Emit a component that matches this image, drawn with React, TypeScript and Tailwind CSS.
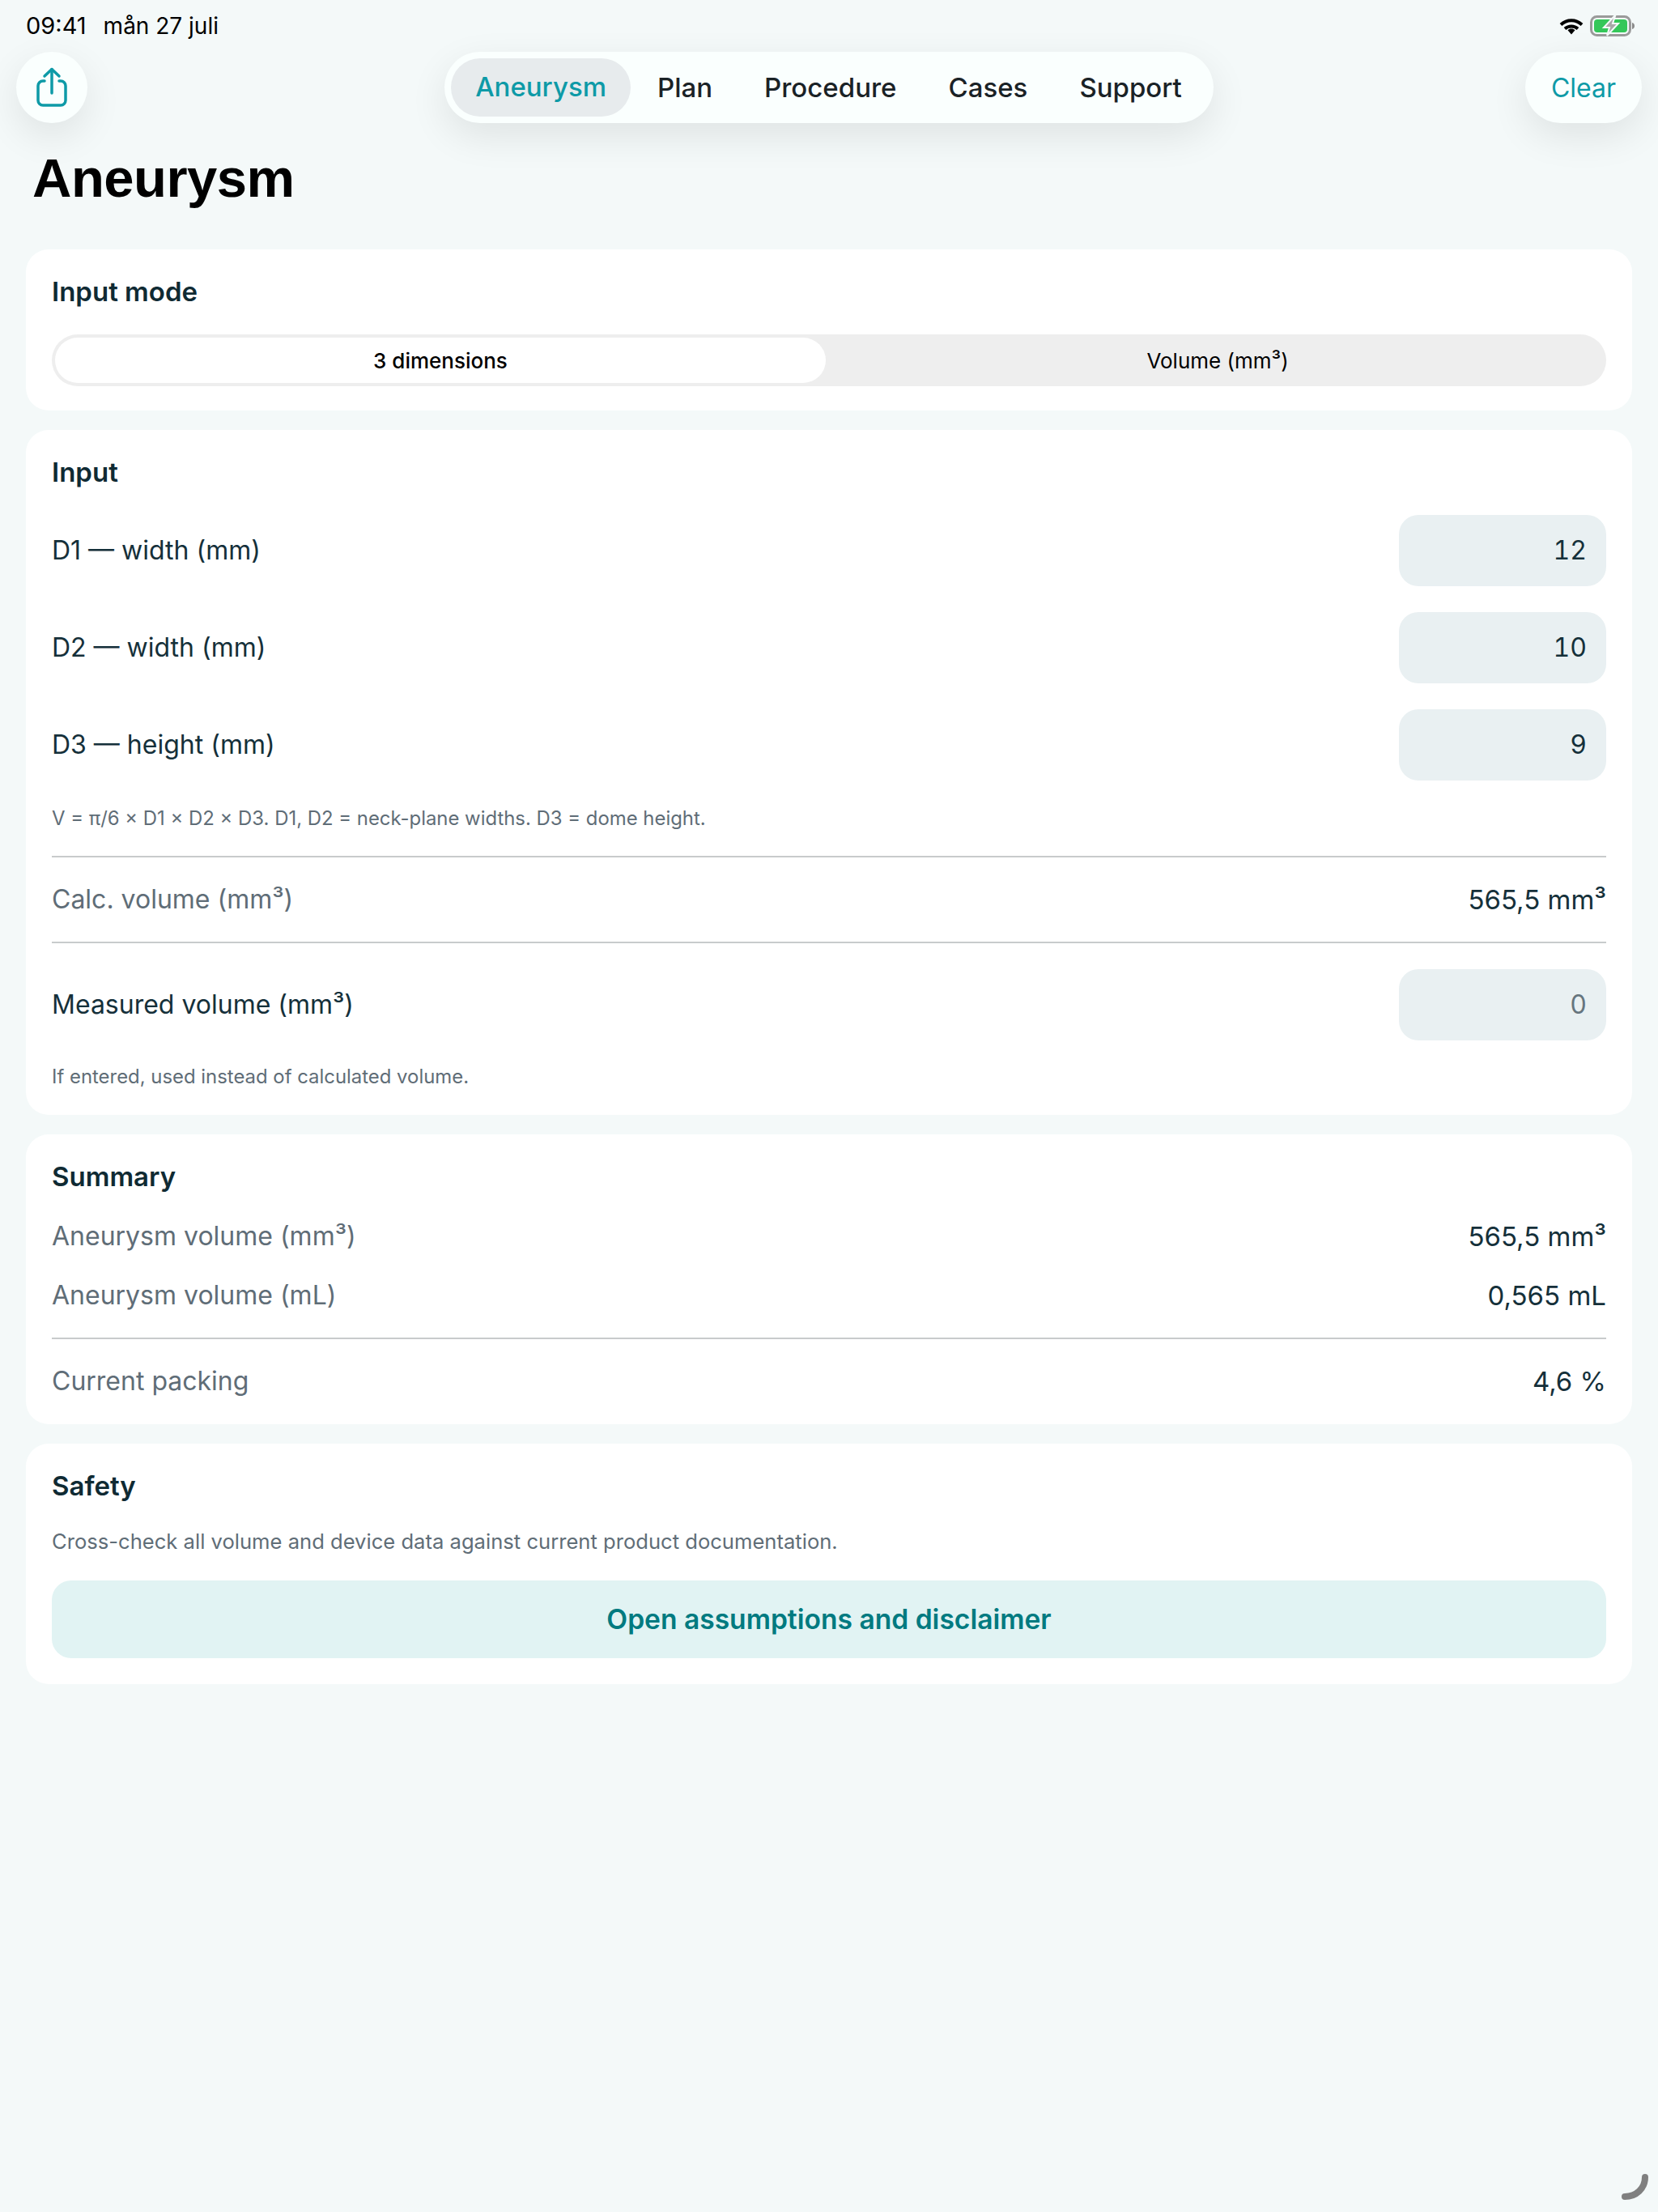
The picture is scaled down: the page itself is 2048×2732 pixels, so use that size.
import React from "react";

function Divider() {
  return <div className="h-[2px] bg-[#c8cbcc]" />;
}

function Field({ label, value, muted }: { label: string; value: string; muted?: boolean }) {
  return (
    <div className="flex items-center justify-between h-[88px]">
      <span className="text-[32px] leading-[44px] text-[#15303a]">{label}</span>
      <div
        className={`w-[256px] h-[88px] rounded-[24px] bg-[#e9f0f2] flex items-center justify-end pr-[24px] text-[32px] tabular-nums ${
          muted ? "text-[#66757e]" : "text-[#15303a]"
        }`}
      >
        {value}
      </div>
    </div>
  );
}

function Stat({ label, value }: { label: string; value: string }) {
  return (
    <div className="flex items-center justify-between">
      <span className="text-[32px] leading-[44px] text-[#5f6d77]">{label}</span>
      <span className="text-[33px] leading-[44px] text-[#15303a]">{value}</span>
    </div>
  );
}

function Card({ title, pb, children }: { title: string; pb: string; children: React.ReactNode }) {
  return (
    <section className={`bg-white rounded-[28px] px-[32px] pt-[32px] ${pb}`}>
      <h2 className="text-[33px] leading-[40px] font-semibold text-[#0f2a33]">{title}</h2>
      {children}
    </section>
  );
}

export default function App() {
  return (
    <div
      className="relative min-h-[2732px] bg-[#f4f9f9] overflow-hidden"
      style={{ fontFamily: "Inter, 'Liberation Sans', sans-serif" }}
    >
      <div className="h-[64px] flex justify-between pl-[32px] pr-[28px] pt-[12px]">
        <div className="flex items-baseline gap-[21px] text-[29px] leading-[40px] text-black">
          <span>09:41</span>
          <span className="text-[28px]">mån 27 juli</span>
        </div>
        <div className="flex items-start gap-[8px] pt-[7px]">
          <svg width="30" height="22" viewBox="0 0 30 22" className="mt-[3px]">
            <path d="M2 8.500C9.500 1.500 20.500 1.500 28 8.500" fill="none" stroke="#000" strokeWidth="4" />
            <path d="M7 13.500C11.500 9.500 18.500 9.500 23 13.500" fill="none" stroke="#000" strokeWidth="4" />
            <path d="M15 13.500c1.800 0 3.300.6 4.500 1.800L15 20.500l-4.500-5.200c1.200-1.200 2.700-1.800 4.500-1.800z" fill="#000" />
          </svg>
          <svg width="56" height="26" viewBox="0 0 56 26">
            <rect x="1.500" y="1.500" width="48" height="23" rx="7" fill="none" stroke="#9a9a9a" strokeWidth="3" />
            <rect x="5" y="5" width="41" height="16" rx="4" fill="#34c759" />
            <path d="M52 9c2 .5 3 2 3 4s-1 3.500-3 4z" fill="#8a8a8a" />
            <path d="M30 1 17 15h7l-3 10 14-15h-7l3-9z" fill="#a8a8a8" stroke="#f4f9f9" strokeWidth="2" />
          </svg>
        </div>
      </div>

      <header className="grid grid-cols-[1fr_auto_1fr] items-start px-[20px]">
        <div className="flex justify-start">
          <button className="w-[88px] h-[88px] rounded-full bg-[#fafffe] shadow-[0_16px_48px_rgba(0,0,0,0.09)] flex items-center justify-center">
            <svg width="42" height="52" viewBox="0 0 42 52" fill="none" stroke="#0e9aa7" strokeWidth="3.500" strokeLinecap="round" strokeLinejoin="round">
              <path d="M21 33V3.500" />
              <path d="M12 12l9-8.500 9 8.500" />
              <path d="M12 18H10a6 6 0 0 0-6 6V42a6 6 0 0 0 6 6H32a6 6 0 0 0 6-6V24a6 6 0 0 0-6-6H30" />
            </svg>
          </button>
        </div>
        <nav className="h-[88px] rounded-[44px] bg-[#fafffe] shadow-[0_16px_48px_rgba(0,0,0,0.09)] p-[8px] flex items-center text-[33px] font-medium text-[#1a2226]">
          <span className="h-[72px] px-[30px] flex items-center rounded-[36px] bg-[#e7ebed] text-[#0e9aa7]">Aneurysm</span>
          <span className="pl-[33px] pr-[32px] pt-[1px]">Plan</span>
          <span className="px-[32px] pt-[1px]">Procedure</span>
          <span className="px-[32px] pt-[1px]">Cases</span>
          <span className="pl-[32px] pr-[31px] pt-[1px]">Support</span>
        </nav>
        <div className="flex justify-end">
          <button className="w-[144px] h-[88px] pt-[1px] rounded-[44px] bg-[#fafffe] shadow-[0_16px_48px_rgba(0,0,0,0.09)] text-[32px] text-[#0e9aa7]">
            Clear
          </button>
        </div>
      </header>

      <h1
        className="pl-[40px] mt-[26px] h-[84px] text-[67px] leading-[84px] font-bold tracking-[-0.5px] text-black"
        style={{ fontFamily: "'Liberation Sans', sans-serif" }}
      >
        Aneurysm
      </h1>

      <main className="mt-[46px] px-[32px] flex flex-col gap-[24px]">
        <Card title="Input mode" pb="pb-[30px]">
          <div className="mt-[33px] h-[64px] rounded-[32px] bg-[#eeeeee] p-[4px] flex text-[26px] text-black">
            <div className="w-[952px] rounded-[28px] bg-white flex items-center justify-center font-medium">3 dimensions</div>
            <div className="flex-1 pl-[8px] flex items-center justify-center">Volume (mm³)</div>
          </div>
        </Card>

        <Card title="Input" pb="pb-[31px]">
          <div className="mt-[33px] flex flex-col gap-[32px]">
            <Field label="D1 — width (mm)" value="12" />
            <Field label="D2 — width (mm)" value="10" />
            <Field label="D3 — height (mm)" value="9" />
          </div>
          <p className="mt-[31px] text-[23.9px] leading-[32px] text-[#5f6d77]">
            V = π/6 × D1 × D2 × D3. D1, D2 = neck-plane widths. D3 = dome height.
          </p>
          <div className="mt-[30px]"><Divider /></div>
          <div className="py-[30px]">
            <Stat label="Calc. volume (mm³)" value="565,5 mm³" />
          </div>
          <Divider />
          <div className="mt-[32px]">
            <Field label="Measured volume (mm³)" value="0" muted />
          </div>
          <p className="mt-[29px] text-[23.9px] leading-[32px] text-[#5f6d77]">If entered, used instead of calculated volume.</p>
        </Card>

        <Card title="Summary" pb="pb-[31px]">
          <div className="mt-[32px] flex flex-col gap-[29px]">
            <Stat label="Aneurysm volume (mm³)" value="565,5 mm³" />
            <Stat label="Aneurysm volume (mL)" value="0,565 mL" />
          </div>
          <div className="mt-[30px]"><Divider /></div>
          <div className="mt-[30px]">
            <Stat label="Current packing" value="4,6 %" />
          </div>
        </Card>

        <Card title="Safety" pb="pb-[32px]">
          <p className="mt-[33px] text-[25.6px] leading-[32px] text-[#5f6d77]">
            Cross-check all volume and device data against current product documentation.
          </p>
          <button className="mt-[32px] w-full h-[96px] rounded-[24px] bg-[#e1f3f3] text-[33.6px] font-semibold text-[#007a80]">
            Open assumptions and disclaimer
          </button>
        </Card>
      </main>

      <svg width="40" height="40" viewBox="0 0 40 40" className="absolute right-[6px] bottom-[8px]">
        <path d="M30 5C30 19 19 29 5 29" fill="none" stroke="#808080" strokeWidth="8" strokeLinecap="round" />
      </svg>
    </div>
  );
}
